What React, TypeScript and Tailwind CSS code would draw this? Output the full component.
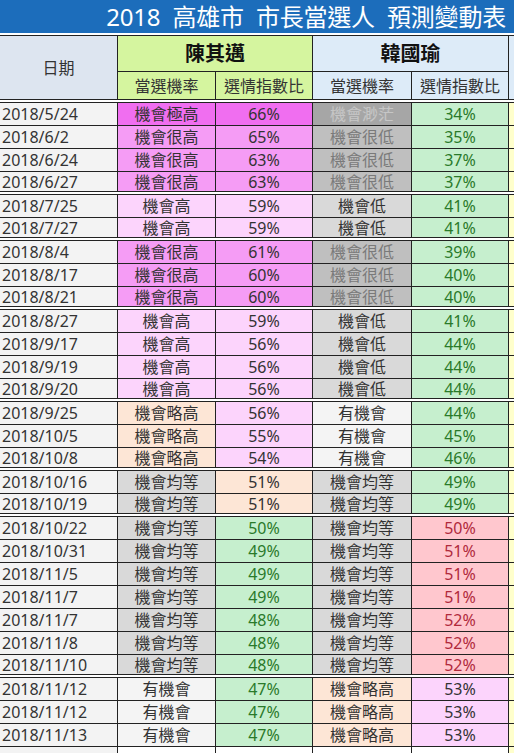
type Row = { date: string; cr: string; cp: string; cs: string; hr: string; hp: string; hs: string; sep?: boolean };

const rateStyle: Record<string, string> = {
  機會極高: "bg-[#f06ef0] text-[#333]",
  機會很高: "bg-[#f59cf5] text-[#333]",
  機會高: "bg-[#fcd4fc] text-[#333]",
  機會略高: "bg-[#fde6d6] text-[#333]",
  機會均等: "bg-[#d9d9d9] text-[#333]",
  有機會: "bg-[#f4f4f4] text-[#333]",
  機會低: "bg-[#d9d9d9] text-[#333]",
  機會很低: "bg-[#bfbfbf] text-[#7a7a7a]",
  機會渺茫: "bg-[#a6a6a6] text-[#c6c6c6]",
};

const pctStyle: Record<string, string> = {
  m1: "bg-[#f06ef0] text-[#333]",
  m2: "bg-[#f59cf5] text-[#333]",
  m3: "bg-[#fcd4fc] text-[#333]",
  peach: "bg-[#fde6d6] text-[#333]",
  good: "bg-[#c6efce] text-[#2a7a2a]",
  bad: "bg-[#ffc7ce] text-[#b02a3c]",
};

// 陳 % colour follows the rate band, 韓 % is good/bad/pink
const rows: Row[] = [
  { date: "2018/5/24", cr: "機會極高", cp: "66%", cs: "m1", hr: "機會渺茫", hp: "34%", hs: "good" },
  { date: "2018/6/2", cr: "機會很高", cp: "65%", cs: "m2", hr: "機會很低", hp: "35%", hs: "good" },
  { date: "2018/6/24", cr: "機會很高", cp: "63%", cs: "m2", hr: "機會很低", hp: "37%", hs: "good" },
  { date: "2018/6/27", cr: "機會很高", cp: "63%", cs: "m2", hr: "機會很低", hp: "37%", hs: "good", sep: true },
  { date: "2018/7/25", cr: "機會高", cp: "59%", cs: "m3", hr: "機會低", hp: "41%", hs: "good" },
  { date: "2018/7/27", cr: "機會高", cp: "59%", cs: "m3", hr: "機會低", hp: "41%", hs: "good", sep: true },
  { date: "2018/8/4", cr: "機會很高", cp: "61%", cs: "m2", hr: "機會很低", hp: "39%", hs: "good" },
  { date: "2018/8/17", cr: "機會很高", cp: "60%", cs: "m2", hr: "機會很低", hp: "40%", hs: "good" },
  { date: "2018/8/21", cr: "機會很高", cp: "60%", cs: "m2", hr: "機會很低", hp: "40%", hs: "good", sep: true },
  { date: "2018/8/27", cr: "機會高", cp: "59%", cs: "m3", hr: "機會低", hp: "41%", hs: "good" },
  { date: "2018/9/17", cr: "機會高", cp: "56%", cs: "m3", hr: "機會低", hp: "44%", hs: "good" },
  { date: "2018/9/19", cr: "機會高", cp: "56%", cs: "m3", hr: "機會低", hp: "44%", hs: "good" },
  { date: "2018/9/20", cr: "機會高", cp: "56%", cs: "m3", hr: "機會低", hp: "44%", hs: "good", sep: true },
  { date: "2018/9/25", cr: "機會略高", cp: "56%", cs: "m3", hr: "有機會", hp: "44%", hs: "good" },
  { date: "2018/10/5", cr: "機會略高", cp: "55%", cs: "m3", hr: "有機會", hp: "45%", hs: "good" },
  { date: "2018/10/8", cr: "機會略高", cp: "54%", cs: "m3", hr: "有機會", hp: "46%", hs: "good", sep: true },
  { date: "2018/10/16", cr: "機會均等", cp: "51%", cs: "peach", hr: "機會均等", hp: "49%", hs: "good" },
  { date: "2018/10/19", cr: "機會均等", cp: "51%", cs: "peach", hr: "機會均等", hp: "49%", hs: "good", sep: true },
  { date: "2018/10/22", cr: "機會均等", cp: "50%", cs: "good", hr: "機會均等", hp: "50%", hs: "bad" },
  { date: "2018/10/31", cr: "機會均等", cp: "49%", cs: "good", hr: "機會均等", hp: "51%", hs: "bad" },
  { date: "2018/11/5", cr: "機會均等", cp: "49%", cs: "good", hr: "機會均等", hp: "51%", hs: "bad" },
  { date: "2018/11/7", cr: "機會均等", cp: "49%", cs: "good", hr: "機會均等", hp: "51%", hs: "bad" },
  { date: "2018/11/7", cr: "機會均等", cp: "48%", cs: "good", hr: "機會均等", hp: "52%", hs: "bad" },
  { date: "2018/11/8", cr: "機會均等", cp: "48%", cs: "good", hr: "機會均等", hp: "52%", hs: "bad" },
  { date: "2018/11/10", cr: "機會均等", cp: "48%", cs: "good", hr: "機會均等", hp: "52%", hs: "bad", sep: true },
  { date: "2018/11/12", cr: "有機會", cp: "47%", cs: "good", hr: "機會略高", hp: "53%", hs: "m3" },
  { date: "2018/11/12", cr: "有機會", cp: "47%", cs: "good", hr: "機會略高", hp: "53%", hs: "m3" },
  { date: "2018/11/13", cr: "有機會", cp: "47%", cs: "good", hr: "機會略高", hp: "53%", hs: "m3" },
];

// grid lines come from the black background showing through 1px gaps
const cols = "grid grid-cols-[117px_97px_96px_98px_96px_5px] gap-x-px";
const cell = "flex items-center justify-center";

function DoubleLine() {
  return <div className="h-[2px] bg-white" />;
}

export default function App() {
  return (
    <div
      className="w-[514px] h-[753px] overflow-hidden bg-white text-[16px] leading-none text-[#333]"
      style={{ fontFamily: '"Noto Sans", "Noto Sans CJK TC", sans-serif' }}
    >
      <div className="h-[33px] bg-[#1c6dbb] flex items-center justify-end pr-[8px]">
        <span className="text-white text-[24px] leading-none whitespace-pre tracking-[-0.2px]">
          {"2018  高雄市  市長當選人  預測變動表"}
        </span>
      </div>
      <div className="h-[2px]" />

      <div className="flex flex-col gap-y-px bg-[#222] pt-px">
        {/* header */}
        <div className={`${cols} grid-rows-[35px_27px] gap-y-px`}>
          <div className={`${cell} row-span-2 bg-[#dde5f0]`}>日期</div>
          <div className={`${cell} col-span-2 bg-[#d5f59f] text-[20px] font-bold text-[#111]`}>陳其邁</div>
          <div className={`${cell} col-span-2 bg-[#ddebf8] text-[20px] font-bold text-[#111]`}>韓國瑜</div>
          <div className="row-span-2 bg-[#ddebf8]" />
          <div className={`${cell} bg-[#d5f59f]`}>當選機率</div>
          <div className={`${cell} bg-[#d5f59f]`}>選情指數比</div>
          <div className={`${cell} bg-[#ddebf8]`}>當選機率</div>
          <div className={`${cell} bg-[#ddebf8]`}>選情指數比</div>
        </div>
        <DoubleLine />

        {rows.map((r, i) => (
          <div key={i} className="contents">
            <div className={`${cols} ${r.sep ? "h-[19px]" : "h-[22px]"}`}>
              <div className="flex items-center pl-[2px] bg-[#f3f3f3]">{r.date}</div>
              <div className={`${cell} ${rateStyle[r.cr]}`}>{r.cr}</div>
              <div className={`${cell} ${pctStyle[r.cs]}`}>{r.cp}</div>
              <div className={`${cell} ${rateStyle[r.hr]}`}>{r.hr}</div>
              <div className={`${cell} ${pctStyle[r.hs]}`}>{r.hp}</div>
              <div className="bg-[#ffffcc]" />
            </div>
            {r.sep && <DoubleLine />}
          </div>
        ))}

        <div className={`${cols} h-[22px]`}>
          <div className="bg-[#f3f3f3]" />
          <div className="bg-white" />
          <div className="bg-white" />
          <div className="bg-white" />
          <div className="bg-white" />
          <div className="bg-[#ffffcc]" />
        </div>
      </div>
    </div>
  );
}
